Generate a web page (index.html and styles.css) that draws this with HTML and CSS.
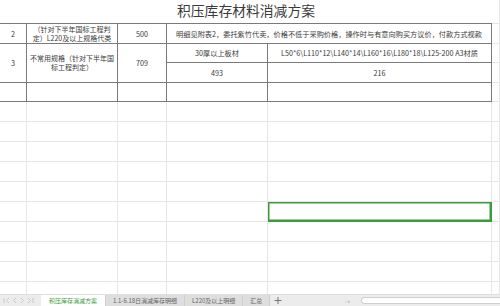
FILE: index.html
```html
<!DOCTYPE html>
<html lang="zh-CN">
  <head>
    <meta charset="UTF-8" />
    <title>积压库存材料消减方案</title>
    <link rel="stylesheet" href="styles.css">
  </head>

  <body>
    <div class="sheet">
      <table class="grid">
        <colgroup>
          <col class="col-a">
          <col class="col-b">
          <col class="col-c">
          <col class="col-d">
          <col class="col-e">
          <col class="col-f">
        </colgroup>
        <tr class="row-title">
          <td colspan="5" class="title">积压库存材料消减方案</td>
          <td></td>
        </tr>
        <tr class="row-2">
          <td class="t">2</td>
          <td class="t two">（针对下半年国标工程判<br>定）L220及以上规格代类</td>
          <td class="t">500</td>
          <td class="t" colspan="2">明细见附表2，委托紫竹代卖，价格不低于采购价格，操作时与有意向购买方议价，付款方式视款</td>
          <td></td>
        </tr>
        <tr class="row-3a">
          <td class="t" rowspan="2">3</td>
          <td class="t two" rowspan="2">不常用规格（针对下半年国<br>标工程判定）</td>
          <td class="t" rowspan="2">709</td>
          <td class="t">30厚以上板材</td>
          <td class="t">L50*6\L110*12\L140*14\L160*16\L180*18\L125-200 A3材质</td>
          <td></td>
        </tr>
        <tr class="row-3b">
          <td class="t">493</td>
          <td class="t">216</td>
          <td></td>
        </tr>
        <tr class="row-4">
          <td class="t"></td>
          <td class="t"></td>
          <td class="t"></td>
          <td class="t"></td>
          <td class="t"></td>
          <td></td>
        </tr>
        <tr><td></td><td></td><td></td><td></td><td></td><td></td></tr>
        <tr><td></td><td></td><td></td><td></td><td></td><td></td></tr>
        <tr><td></td><td></td><td></td><td></td><td></td><td></td></tr>
        <tr><td></td><td></td><td></td><td></td><td></td><td></td></tr>
        <tr><td></td><td></td><td></td><td></td><td></td><td></td></tr>
        <tr><td></td><td></td><td></td><td></td><td class="selected"></td><td></td></tr>
        <tr><td></td><td></td><td></td><td></td><td></td><td></td></tr>
        <tr><td></td><td></td><td></td><td></td><td></td><td></td></tr>
        <tr><td></td><td></td><td></td><td></td><td></td><td></td></tr>
        <tr><td></td><td></td><td></td><td></td><td></td><td></td></tr>
      </table>
    </div>

    <div class="tabbar">
      <div class="nav">
        <svg width="40" height="11" viewBox="0 0 40 11">
          <path d="M4 3v5M9 3L6.5 5.5 9 8" fill="none" stroke="#c9c9c9" stroke-width="1" />
          <path d="M16 3l-2.5 2.5L16 8" fill="none" stroke="#c9c9c9" stroke-width="1" />
          <path d="M21 3l2.5 2.5L21 8" fill="none" stroke="#c9c9c9" stroke-width="1" />
          <path d="M28 3l2.5 2.5L28 8M33 3v5" fill="none" stroke="#c9c9c9" stroke-width="1" />
        </svg>
      </div>
      <div class="tab active">积压库存消减方案</div>
      <div class="tab">1.1-6.18日消减库存明细</div>
      <div class="tab">L220及以上明细</div>
      <div class="tab">汇总</div>
      <div class="add">
        <svg width="8" height="11" viewBox="0 0 8 11">
          <path d="M4 2v7M0.5 5.5h7" fill="none" stroke="#777" stroke-width="1" />
        </svg>
      </div>
      <div class="spacer"></div>
      <div class="scroll-ctl">⁝ ◂</div>
      <div class="scroll-track"></div>
    </div>
  </body>
</html>
```

FILE: styles.css
```css
html,
body {
  margin: 0;
  padding: 0;
}

body {
  width: 500px;
  height: 306px;
  overflow: hidden;
  background: #fff;
  font-family: "Noto Sans CJK SC", "Noto Sans", sans-serif;
  color: #3a3a3a;
}

.sheet {
  height: 294px;
  overflow: hidden;
}

.grid {
  table-layout: fixed;
  width: 500px;
  border-collapse: separate;
  border-spacing: 0;
}

.col-a { width: 27px; }
.col-b { width: 91px; }
.col-c { width: 49px; }
.col-d { width: 101px; }
.col-e { width: 224px; }
.col-f { width: 8px; }

.grid td {
  box-sizing: border-box;
  height: 20px;
  padding: 0 1px;
  border-right: 1px solid #e6e6e6;
  border-bottom: 1px solid #e6e6e6;
  font-size: 7.2px;
  line-height: 8px;
  text-align: center;
  vertical-align: middle;
  white-space: nowrap;
  overflow: hidden;
}

.grid .row-title td {
  height: 24px;
}

.grid td.title {
  border-right: none;
  border-bottom: 1px solid #7a7a7a;
  font-size: 13.8px;
  line-height: 16px;
  color: #3a3a3a;
  padding-bottom: 3px;
}

.grid .row-2 td { height: 20px; }
.grid .row-3a td { height: 19px; }
.grid .row-3b td { height: 20px; }
.grid .row-4 td { height: 19px; }

.grid td.t {
  border-right: 1px solid #7a7a7a;
  border-bottom: 1px solid #7a7a7a;
}

.grid td.two {
  line-height: 9px;
  font-size: 7px;
}

.grid td.selected {
  box-shadow: inset 0 0 0 1.5px #3c9c3c;
  border-right-color: #3c9c3c;
  border-bottom-color: #3c9c3c;
}

.tabbar {
  display: flex;
  align-items: stretch;
  height: 12px;
  background: #ececec;
  border-top: 1px solid #dedede;
  box-sizing: border-box;
  font-size: 6px;
  line-height: 11px;
  color: #666;
}

.nav {
  width: 41px;
  display: flex;
  align-items: center;
}

.tab {
  padding: 0 7px;
  background: #dedede;
  border-right: 1px solid #cfcfcf;
  white-space: nowrap;
}

.tab.active {
  background: #fff;
  color: #3a9a3a;
  padding: 0 8px;
}

.add {
  display: flex;
  align-items: center;
  padding: 0 4px;
}

.spacer {
  flex: 1;
}

.scroll-ctl {
  width: 16px;
  color: #bbb;
  font-size: 5px;
}

.scroll-track {
  width: 138px;
  margin: 2px 0 2px 0;
  background: #fff;
  border: 1px solid #d0d0d0;
  border-radius: 4px 0 0 4px;
  border-right: none;
}
```
